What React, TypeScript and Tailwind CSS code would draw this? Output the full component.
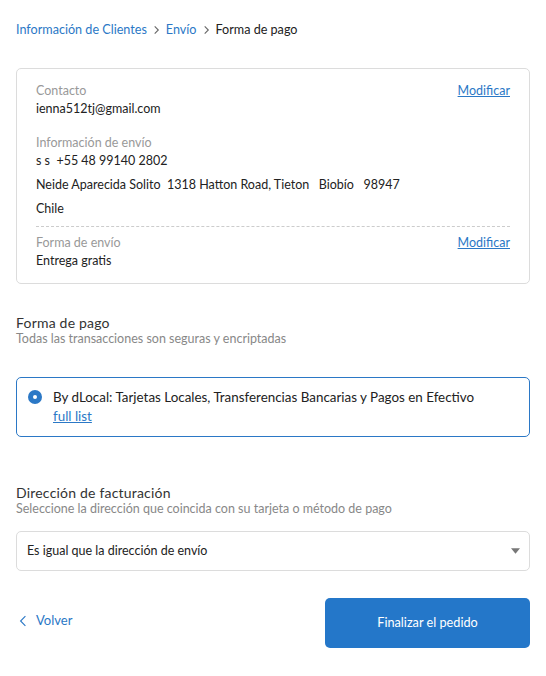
import React, { useState } from "react";

function Chevron({ className }: { className?: string }) {
  return (
    <svg viewBox="0 0 10 10" className={className} fill="none" stroke="currentColor" strokeWidth="1.2">
      <path d="M3 1 L7 5 L3 9" />
    </svg>
  );
}

export default function App() {
  const [billing, setBilling] = useState("same");

  return (
    <div className="min-h-screen bg-white text-[#333] font-['Lato',sans-serif]">
      <div className="px-4 pt-[21px] pb-6">
        {/* breadcrumb */}
        <nav className="flex items-center gap-[5px] text-[12.6px] leading-[18px]">
          <a href="#" className="text-[#2b78c6]">Información de Clientes</a>
          <Chevron className="w-[9px] h-[10px] text-[#666]" />
          <a href="#" className="text-[#2b78c6]">Envío</a>
          <Chevron className="w-[9px] h-[10px] text-[#666]" />
          <span className="text-[#222]">Forma de pago</span>
        </nav>

        {/* summary card */}
        <section className="mt-[29px] rounded-[5px] border border-[#dcdcdc] px-[19px] pt-[13px] pb-[13px] text-[12.5px] leading-[18px]">
          <div className="flex justify-between">
            <div>
              <div className="text-[#999]">Contacto</div>
              <div className="text-[#222]">ienna512tj@gmail.com</div>
            </div>
            <a href="#" className="text-[#2b78c6] underline">Modificar</a>
          </div>

          <div className="mt-4">
            <div className="text-[#999]">Información de envío</div>
            <div className="text-[#222]">s s&nbsp; +55 48 99140 2802</div>
            <div className="mt-[6px] text-[#222]">
              Neide Aparecida Solito&nbsp; 1318 Hatton Road, Tieton&nbsp;&nbsp; Biobío&nbsp;&nbsp; 98947
            </div>
            <div className="mt-[6px] text-[#222]">Chile</div>
          </div>

          <div className="mt-[8px] border-t border-dashed border-[#ccc]" />

          <div className="mt-[7px] flex justify-between">
            <div>
              <div className="text-[#999]">Forma de envío</div>
              <div className="text-[#222]">Entrega gratis</div>
            </div>
            <a href="#" className="text-[#2b78c6] underline">Modificar</a>
          </div>
        </section>

        {/* payment */}
        <section className="mt-[30px]">
          <h2 className="text-[14px] leading-[17px] text-[#333] tracking-[0.2px]">Forma de pago</h2>
          <p className="text-[12.5px] leading-[16px] text-[#888]">Todas las transacciones son seguras y encriptadas</p>

          <div className="mt-[30px] rounded-[5px] border border-[#2b78c6] pl-[11px] pr-4 pt-[10px] pb-[10px] flex gap-[11px]">
            <span className="mt-[2px] w-[14px] h-[14px] rounded-full bg-[#2b78c6] flex items-center justify-center shrink-0">
              <span className="w-[4px] h-[4px] rounded-full bg-white" />
            </span>
            <div className="text-[13.4px] leading-[19px] text-[#222]">
              <div>By dLocal: Tarjetas Locales, Transferencias Bancarias y Pagos en Efectivo</div>
              <a href="#" className="text-[#2b78c6] underline">full list</a>
            </div>
          </div>
        </section>

        {/* billing */}
        <section className="mt-[47px]">
          <h2 className="text-[14px] leading-[17px] text-[#333] tracking-[0.2px]">Dirección de facturación</h2>
          <p className="text-[12.5px] leading-[16px] text-[#888]">Seleccione la dirección que coincida con su tarjeta o método de pago</p>

          <div className="relative mt-[14px]">
            <select
              value={billing}
              onChange={(e) => setBilling(e.target.value)}
              className="w-full h-[40px] appearance-none rounded-[5px] border border-[#dcdcdc] bg-white pl-[10px] pr-8 text-[12.5px] text-[#222] outline-none font-['Lato',sans-serif]"
            >
              <option value="same">Es igual que la dirección de envío</option>
              <option value="other">Usar una dirección de facturación distinta</option>
            </select>
            <svg viewBox="0 0 10 6" className="pointer-events-none absolute right-[10px] top-[17px] w-[9px] h-[6px]">
              <path d="M0 0 L10 0 L5 6 Z" fill="#777" />
            </svg>
          </div>
        </section>

        {/* actions */}
        <div className="mt-[27px] flex items-center justify-between">
          <a href="#" className="ml-[3px] -mt-[5px] flex items-center gap-[9px] text-[13px] text-[#2b78c6]">
            <svg viewBox="0 0 10 14" className="w-[8px] h-[12px]" fill="none" stroke="currentColor" strokeWidth="1.4">
              <path d="M8 1 L2 7 L8 13" />
            </svg>
            Volver
          </a>
          <button className="w-[205px] h-[50px] rounded-[5px] bg-[#2477c9] text-white text-[12.7px] font-['Lato',sans-serif]">
            Finalizar el pedido
          </button>
        </div>
      </div>
    </div>
  );
}
